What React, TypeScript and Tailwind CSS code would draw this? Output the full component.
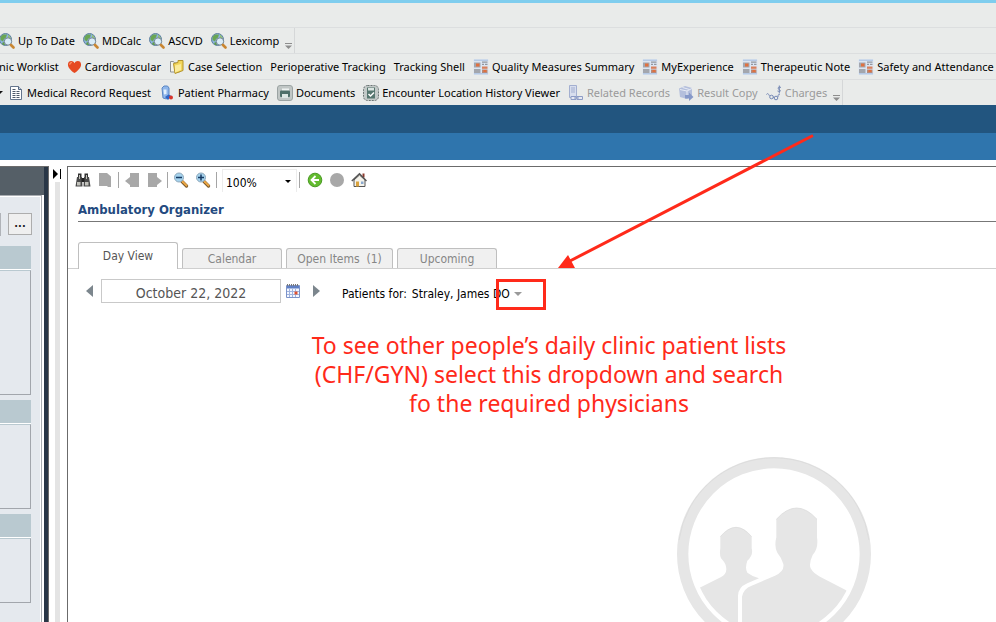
import type { ReactNode } from 'react'

const TAHOMA = "font-['DejaVu_Sans_Condensed','DejaVu_Sans',sans-serif]"
const SEGOE = "font-['Noto_Sans','Open_Sans',sans-serif]"

function Svg({ children, className = 'size-4' }: { children: ReactNode; className?: string }) {
  return (
    <svg viewBox="0 0 16 16" className={`${className} shrink-0`} aria-hidden="true">
      {children}
    </svg>
  )
}

const GlobeIcon = () => (
  <Svg>
    <circle cx="6.5" cy="6.500" r="6" fill="#8db4dc" stroke="#5e7f9f" />
    <path d="M1.500 4 4 1.500 8 1.500 7 4.500 5 6 4 8.500 1.500 7z" fill="#6aa653" />
    <path d="M9 1.500 12 5 11 6 9 5z" fill="#93c270" />
    <path d="M3 10 5 9 6 12 4 12z" fill="#5f9d4b" />
    <circle cx="9" cy="8.500" r="3.700" fill="#d9ecf8" stroke="#71828f" />
    <path d="M12 12 14.500 14.500" stroke="#c98632" strokeWidth="2.600" strokeLinecap="round" />
  </Svg>
)

const HeartIcon = () => (
  <svg viewBox="0 0 16 16" className="h-4 w-[15px] shrink-0" aria-hidden="true">
    <path d="M8 14.500C3 10.500 1 8 1 5.200 1 3 2.600 1.700 4.500 1.700c1.600 0 2.800.9 3.500 2.200.7-1.300 1.900-2.200 3.500-2.200C13.400 1.700 15 3 15 5.200 15 8 13 10.500 8 14.500z" fill="#e64a22" />
    <path d="M3 5.500c0-1.500 1-2.300 2.200-2" stroke="#ff9a70" strokeWidth="1.300" fill="none" />
  </svg>
)

const FoldersIcon = () => (
  <Svg>
    <path d="M1.500 2.500h3l1 1.500h5v9h-9z" fill="#f4f3ea" stroke="#8f9294" />
    <path d="M4.500 4.500 9 3.500V1.500h5v10l-8 3z" fill="#f3d65b" stroke="#b4942c" />
    <path d="M6 6.500 12 5v6l-6 2.500z" fill="#fbeb9a" />
  </Svg>
)

const NewsIcon = () => (
  <Svg>
    <path d="M.5.500h15v15H.500z" fill="#dbe5f2" />
    <path d="M1 .5h14v1.500H1zM1 14h14v1.500H1z" fill="#b5c9e6" />
    <path d="M1 3.500h6.500v5H1zM1 10h6.500v4H1z" fill="#a3a6ad" />
    <path d="M3 4.500h3.500v3H3z" fill="#e0703f" />
    <path d="M9 2.500h5.500v1.200H9zM9 4.700h2v1.200H9zM12 4.700h2.500v1.200H12z" fill="#94979e" />
    <path d="M9 7.500h5.500v2.300H9z" fill="#d9805c" />
    <path d="M9 10.500h5.500V14H9z" fill="#b58a7b" />
    <path d="M10.500 11h3v2h-3z" fill="#e0703f" />
  </Svg>
)

const ReportIcon = () => (
  <Svg>
    <path d="M2.500 1.500h8l3 3v10h-11z" fill="#fff" stroke="#64758d" />
    <path d="M10.500 1.500v3h3" fill="#c6d2e2" stroke="#53657f" />
    <path d="M4.500 4.500h3M4.500 6.500h3M8.500 6.500h3M4.500 8.500h3M8.500 8.500h3M4.500 10.500h3M8.500 10.500h3M4.500 12.500h3M8.500 12.500h3" stroke="#4f5a6b" />
  </Svg>
)

const PharmacyIcon = () => (
  <Svg>
    <path d="M3 3 5 1h3.500l1.500 2v8.500L7.500 14 4 13z" fill="#8fb6ea" stroke="#5a86c4" />
    <path d="M4.500 4.500h3V9l-2.500.5z" fill="#e2f0fd" />
    <path d="M6 12 9.500 9.500l3 1.500-3.500 4z" fill="#2f66c8" />
    <circle cx="12" cy="12.500" r="2" fill="#d8352c" />
  </Svg>
)

const PrinterIcon = () => (
  <Svg>
    <rect x=".5" y=".5" width="15" height="15" rx="2.500" fill="#c0c6c5" stroke="#9ba3a3" />
    <path d="M5 3.500h7v3H5z" fill="#eef2f1" />
    <rect x="3" y="5.500" width="10" height="6.500" rx="1" fill="#50706a" />
    <path d="M5 9h6v4H5z" fill="#dfe8e5" />
  </Svg>
)

const EncounterIcon = () => (
  <Svg>
    <rect x=".5" y=".5" width="15" height="15" rx="4" fill="#c3c9c8" stroke="#6b7474" strokeDasharray="2 1" />
    <path d="M4 2.500h8v11H4z" fill="#56766f" />
    <path d="M5 3h6v2.500H5z" fill="#dbe5e2" />
    <path d="M5.500 9 7.500 11 11 7.500" stroke="#fff" strokeWidth="1.500" fill="none" />
  </Svg>
)

const RelatedIcon = () => (
  <Svg>
    <path d="M1.500.500h7v12h-7z" fill="#d8deee" stroke="#a3afd0" />
    <path d="M3 3h4M3 5h4M3 7h4" stroke="#a3afd0" />
    <path d="M3 11.500h5v3H3zM9 11.500h5.500v3H9zM6 13h5" fill="#e6e9f1" stroke="#8d9cc6" />
  </Svg>
)

const CopyIcon = () => (
  <Svg>
    <path d="M1 3.500 7 1l7 2v7l-5 4-7-2z" fill="#b4bfdc" />
    <path d="M2 4.500 9 6v6M9 6l5-2.500M4.500 2.500l7 2" stroke="#e8ecf5" fill="none" />
    <path d="M7 10h4V7.500l4.500 4.500-4.500 4V13.500H7z" fill="#8598c8" />
  </Svg>
)

const ChargesIcon = () => (
  <Svg>
    <path d="M15 2.500c-2.500-1.500-4 1-2 2s2 3-1.500 1.500M13.300.500v8" stroke="#7588b5" fill="none" />
    <circle cx="5.500" cy="12" r="1.800" fill="none" stroke="#7588b5" />
    <circle cx="10" cy="13" r="1.800" fill="none" stroke="#7588b5" />
    <path d="M.500 9.500c1-2 2.500 0 3 1.500M7 12l1 .5M12 12c0-3 1-3 2-2" fill="none" stroke="#7588b5" />
  </Svg>
)

const Overflow = () => (
  <svg viewBox="0 0 7 6" className="mb-1 ml-0.5 h-1.5 w-[7px] self-end" aria-hidden="true">
    <path d="M0 .5h7" stroke="#8d8d8d" />
    <path d="M0 2.500h7L3.500 6z" fill="#8d8d8d" />
  </svg>
)

function Tool({ icon, label, disabled }: { icon?: ReactNode; label: string; disabled?: boolean }) {
  return (
    <button
      type="button"
      disabled={disabled}
      className="flex shrink-0 items-center gap-[3px] px-1 whitespace-nowrap text-black disabled:text-[#9a9a9a]"
    >
      {icon}
      <span>{label}</span>
    </button>
  )
}

const BAR = 'flex h-[26px] items-center border-t border-[#dcdedf] overflow-hidden'

function TopBars() {
  return (
    <header className={`${SEGOE} bg-[#e9ebea] text-[11px] leading-4`}>
      <div className="h-[3px] bg-[#7fcdee]" />
      <div className="h-6" />
      <div className={BAR}>
        <div className="-ml-[5px] flex h-full items-center border-r border-[#d5d7d8] pr-0.5">
          <Tool icon={<GlobeIcon />} label="Up To Date" />
          <Tool icon={<GlobeIcon />} label="MDCalc" />
          <Tool icon={<GlobeIcon />} label="ASCVD" />
          <Tool icon={<GlobeIcon />} label="Lexicomp" />
          <Overflow />
        </div>
      </div>
      <div className={BAR}>
        <div className="-ml-[5px] flex items-center">
          <Tool label="nic Worklist" />
          <Tool icon={<HeartIcon />} label="Cardiovascular" />
          <Tool icon={<FoldersIcon />} label="Case Selection" />
          <Tool label="Perioperative Tracking" />
          <Tool label="Tracking Shell" />
          <Tool icon={<NewsIcon />} label="Quality Measures Summary" />
          <Tool icon={<NewsIcon />} label="MyExperience" />
          <Tool icon={<NewsIcon />} label="Therapeutic Note" />
          <Tool icon={<NewsIcon />} label="Safety and Attendance" />
        </div>
      </div>
      <div className={BAR}>
        <div className="flex h-full items-center border-r border-[#d5d7d8] pr-0.5">
          <svg viewBox="0 0 4 4" className="size-1" aria-hidden="true">
            <path d="M0 0h3L0 3z" fill="#111" />
          </svg>
          <Tool icon={<ReportIcon />} label="Medical Record Request" />
          <Tool icon={<PharmacyIcon />} label="Patient Pharmacy" />
          <Tool icon={<PrinterIcon />} label="Documents" />
          <Tool icon={<EncounterIcon />} label="Encounter Location History Viewer" />
          <Tool icon={<RelatedIcon />} label="Related Records" disabled />
          <Tool icon={<CopyIcon />} label="Result Copy" disabled />
          <Tool icon={<ChargesIcon />} label="Charges" disabled />
          <Overflow />
        </div>
      </div>
      <div className="h-[28px] bg-[#22557f]" />
      <div className="h-[27px] bg-[#2f75ad]" />
    </header>
  )
}

function Group({ body }: { body: string }) {
  return (
    <section className="mb-[5px]">
      <div className="h-[23px] bg-[#b9c9d0]" />
      <div className="h-px bg-white" />
      <div className={`${body} border-t border-r border-b border-t-[#b9c9d0] border-r-[#a2a6ac] border-b-[#a2a6ac]`} />
    </section>
  )
}

function Sidebar() {
  return (
    <aside className="flex w-[49px] shrink-0 flex-col border-t border-r border-[#6b6b6b]">
      <div className="flex flex-1 flex-col border-r-4 border-[#283646]">
        <div className="h-[28px] bg-[#555f67]" />
        <div className="mr-0.5 flex-1 border-t border-r border-[#a9adb2]">
          <div className="h-full border-t border-r border-white bg-[#e5e9ee] pr-[9px]">
            <div className="mt-4 mb-[10px] flex h-[23px] justify-between">
              <div className="w-px bg-[#b0b3b8]" />
              <button
                type="button"
                className={`${TAHOMA} -mr-px h-[22px] w-6 border border-[#adadad] bg-[#efefef] text-[11px] leading-4 font-bold text-[#222]`}
              >
                ...
              </button>
            </div>
            <Group body="h-[125px]" />
            <Group body="h-[85px]" />
            <Group body="h-[65px]" />
          </div>
        </div>
      </div>
    </aside>
  )
}

function Splitter() {
  return (
    <div className="flex w-[18px] shrink-0 flex-col pl-1">
      <svg viewBox="0 0 8 10" className="mt-[3px] h-[10px] w-2" aria-hidden="true">
        <path d="M0 0 5 5 0 10z" fill="#000" />
        <path d="M7.500 0v10" stroke="#000" />
      </svg>
      <div className="mt-[3px] ml-0.5 w-[5px] flex-1 bg-[#e4e4e4]" />
    </div>
  )
}

const Binoculars = () => (
  <Svg>
    <path d="M3 1.500h3.500v4H3zM9.500 1.500H13v4H9.500z" fill="#333" />
    <path d="M2 5h5l.5 9.500H.500zM9 5h5l1.500 9.500h-7z" fill="#4a4a4a" />
    <path d="M6.500 6h3v4h-3z" fill="#222" />
    <path d="M2 10h3.500v3.500H2zM10 10h3.500v3.500H10zM4 3h1v4H4zM11 3h1v4h-1z" fill="#c2c2bb" />
  </Svg>
)

function Magnifier({ plus }: { plus?: boolean }) {
  return (
    <Svg>
      <path d="M9 9.500 13.500 14" stroke="#7c5a2c" strokeWidth="3.200" strokeLinecap="round" />
      <path d="M9.500 9.500 13.500 13.500" stroke="#eda845" strokeWidth="1.800" strokeLinecap="round" />
      <circle cx="6" cy="5.500" r="4.500" fill="#a5d3ee" stroke="#8fa8ba" />
      <path d={plus ? 'M3 5.500h6M6 2.500v6' : 'M3 5.500h6'} stroke="#173a63" strokeWidth="1.500" />
    </Svg>
  )
}

const Divider = () => <div className="mx-0.5 h-4 w-px bg-[#a5a5a5]" />

function IconButton({ label, children }: { label: string; children: ReactNode }) {
  return (
    <button type="button" aria-label={label} className="flex w-[22px] justify-center">
      {children}
    </button>
  )
}

function ViewToolbar() {
  return (
    <div className="flex h-[26px] items-center pl-1">
      <IconButton label="Find"><Binoculars /></IconButton>
      <IconButton label="Page">
        <Svg><path d="M2 1h8l4 3.500V15h-3l-1-1H2z" fill="#a8a8a8" /></Svg>
      </IconButton>
      <Divider />
      <IconButton label="Previous page">
        <Svg><path d="M6 1h9v14H6v-2L1 9 6 5z" fill="#a8a8a8" /></Svg>
      </IconButton>
      <IconButton label="Next page">
        <Svg><path d="M2 1h9v4l5 4-5 4v2H2z" fill="#a8a8a8" /></Svg>
      </IconButton>
      <Divider />
      <IconButton label="Zoom out"><Magnifier /></IconButton>
      <IconButton label="Zoom in"><Magnifier plus /></IconButton>
      <Divider />
      <div className="relative ml-[3px] h-[23px] w-[75px] border border-[#ececec]">
        <select
          aria-label="Zoom"
          className={`${TAHOMA} h-5 w-full appearance-none bg-white pl-[3px] text-[12px] leading-4 text-black`}
        >
          <option>100%</option>
        </select>
        <svg viewBox="0 0 6 3" className="absolute top-[10px] right-[5px] h-[3px] w-1.5" aria-hidden="true">
          <path d="M0 0h6L3 3z" fill="#000" />
        </svg>
      </div>
      <div className="mr-1 ml-0.5 h-4 w-px bg-[#a5a5a5]" />
      <IconButton label="Back">
        <Svg>
          <circle cx="8" cy="8" r="6.800" fill="#62bb2e" stroke="#4a9a24" />
          <path d="M8.500 4 4.500 8l4 4M5 8h7" stroke="#fff" strokeWidth="1.800" fill="none" />
        </Svg>
      </IconButton>
      <IconButton label="Stop">
        <Svg><circle cx="8" cy="8" r="7" fill="#a8a8a8" /></Svg>
      </IconButton>
      <IconButton label="Home">
        <Svg>
          <path d="M11.500 1.500h2v4h-2z" fill="#8e3b2d" />
          <path d="M3 8 8.500 3 14 8v6.500H3z" fill="#f4f2ea" stroke="#555" />
          <path d="M.800 9 8.500 1.800 15.500 9" stroke="#555" strokeWidth="1.500" fill="none" />
          <path d="M5 9.500h3v5H5z" fill="#d9a23c" />
          <path d="M10 9.500h2.500V12H10z" fill="#8aa9cf" />
        </Svg>
      </IconButton>
    </div>
  )
}

function Tab({ label, width = 'w-[100px]' }: { label: string; width?: string }) {
  return (
    <button
      type="button"
      role="tab"
      aria-selected="false"
      className={`${width} h-5 rounded-t-[3px] border border-b-0 border-[#bfbfbf] bg-[#f0f0f0] whitespace-pre text-[#868686]`}
    >
      {label}
    </button>
  )
}

function Tabs() {
  return (
    <div className="mt-5 border-b border-[#cfcfcf] pl-[10px]">
      <div role="tablist" className="-mb-px flex items-end gap-1 text-[12px] leading-4">
        <button
          type="button"
          role="tab"
          aria-selected="true"
          className="h-[27px] w-[100px] rounded-t-[3px] border border-b-0 border-[#bfbfbf] bg-white text-[#555]"
        >
          Day View
        </button>
        <div className="flex gap-1 pb-px">
          <Tab label="Calendar" />
          <Tab label="Open Items  (1)" width="w-[107px]" />
          <Tab label="Upcoming" />
        </div>
      </div>
    </div>
  )
}

const CalendarIcon = () => (
  <Svg>
    <path d="M1.500 2.500h13v12h-13z" fill="#f4f7ff" stroke="#7b93c9" />
    <path d="M2 3h12v2.500H2z" fill="#5f7fc4" />
    <path d="M2.500 1v2M4.500 1v2M6.500 1v2M8.500 1v2M10.500 1v2M12.500 1v2" stroke="#777" />
    <path d="M2 8.500h12M2 11.500h12M4.500 6v8M7.500 6v8M10.500 6v8" stroke="#9fb3de" />
    <path d="M9.500 8.500h3v3h-3z" fill="#e0512f" />
  </Svg>
)

function DayBar() {
  return (
    <div className="flex items-center pt-[10px] pl-[18px] text-[12px] leading-4 text-black">
      <button type="button" aria-label="Previous day">
        <svg viewBox="0 0 7 12" className="h-3 w-[7px]"><path d="M7 0v12L0 6z" fill="#7c868d" /></svg>
      </button>
      <input
        aria-label="Date"
        defaultValue="October 22, 2022"
        className="ml-2 h-6 w-[180px] border border-[#c9c9c9] bg-white pt-1 text-center text-[14px] leading-4 text-[#555]"
      />
      <button type="button" aria-label="Open calendar" className="ml-1"><CalendarIcon /></button>
      <button type="button" aria-label="Next day" className="ml-3">
        <svg viewBox="0 0 7 12" className="h-3 w-[7px]"><path d="M0 0v12l7-6z" fill="#7c868d" /></svg>
      </button>
      <div className="mt-1.5 ml-[22px] flex gap-[5px]">
        <span>Patients for:</span>
        <button type="button" className="relative flex items-center gap-1">
          Straley, James DO
          <svg viewBox="0 0 8 4" className="h-1 w-2" aria-hidden="true"><path d="M0 0h8L4 4z" fill="#9a9a9a" /></svg>
          <span className="absolute -top-[7px] left-[84px] h-[31px] w-[50px] border-[3px] border-[#ff2a1a]" />
        </button>
      </div>
    </div>
  )
}

function PatientsArt() {
  return (
    <svg viewBox="51 51 582 582" className="size-[194px] shrink-0" aria-hidden="true">
      <defs>
        <clipPath id="disc"><circle cx="342" cy="342" r="244" /></clipPath>
      </defs>
      <circle cx="342" cy="342" r="274" fill="none" stroke="#e6e6e6" strokeWidth="34" />
      <path d="M57 300A288 288 0 0 1 627 300" fill="none" stroke="#d8d8d8" strokeWidth="2" />
      <g clipPath="url(#disc)" fill="#e6e6e6">
        <path d="M181 290Q228 234 275 290V325Q281 345 262 362Q254 385 262 398Q275 408 297 415L262 430Q234 442 234 468V600H60V465L122 442L182 412Q203 400 198 380Q197 370 183 355Q178 345 181 325Z" />
        <path d="M349 238Q410 170 471 238V292Q476 325 458 345Q446 370 452 385Q460 400 480 410L557 450L600 480V620H246V470Q250 446 275 437L345 407Q374 394 370 372Q366 355 352 338Q342 320 349 292Z" />
      </g>
      <path d="M181 290Q228 234 275 290M349 238Q410 170 471 238" fill="none" stroke="#d8d8d8" strokeWidth="2" />
    </svg>
  )
}

function Annotation() {
  return (
    <>
      <svg viewBox="0 0 260 140" className="pointer-events-none absolute top-[132px] left-[556px] h-[140px] w-[260px]" aria-hidden="true">
        <path d="M12 130 257 3.500" stroke="#ff2a1a" strokeWidth="3" />
        <path d="M2 136 12 123l7 13z" fill="#ff2a1a" />
      </svg>
      <p className={`${SEGOE} pointer-events-none absolute top-[331px] left-[309px] w-[480px] text-center text-[23px] leading-[29px] whitespace-nowrap text-[#ff2a1a]`}>
        To see other people’s daily clinic patient lists
        <br />
        (CHF/GYN) select this dropdown and search
        <br />
        fo the required physicians
      </p>
    </>
  )
}

export default function App() {
  return (
    <div className={`${TAHOMA} relative flex h-screen flex-col overflow-hidden bg-white`}>
      <TopBars />
      <div className="flex min-h-0 flex-1 pt-1.5">
        <Sidebar />
        <Splitter />
        <main className="flex min-w-0 flex-1 flex-col overflow-hidden border-t border-l border-[#6b6b6b]">
          <ViewToolbar />
          <h1 className="ml-[10px] h-[29px] border-b border-[#777] pt-[9px] text-[13px] leading-4 font-bold text-[#234a80]">
            Ambulatory Organizer
          </h1>
          <Tabs />
          <DayBar />
          <div className="flex min-h-0 flex-1 justify-end overflow-hidden pt-[154px] pr-[125px]">
            <PatientsArt />
          </div>
        </main>
      </div>
      <Annotation />
    </div>
  )
}
